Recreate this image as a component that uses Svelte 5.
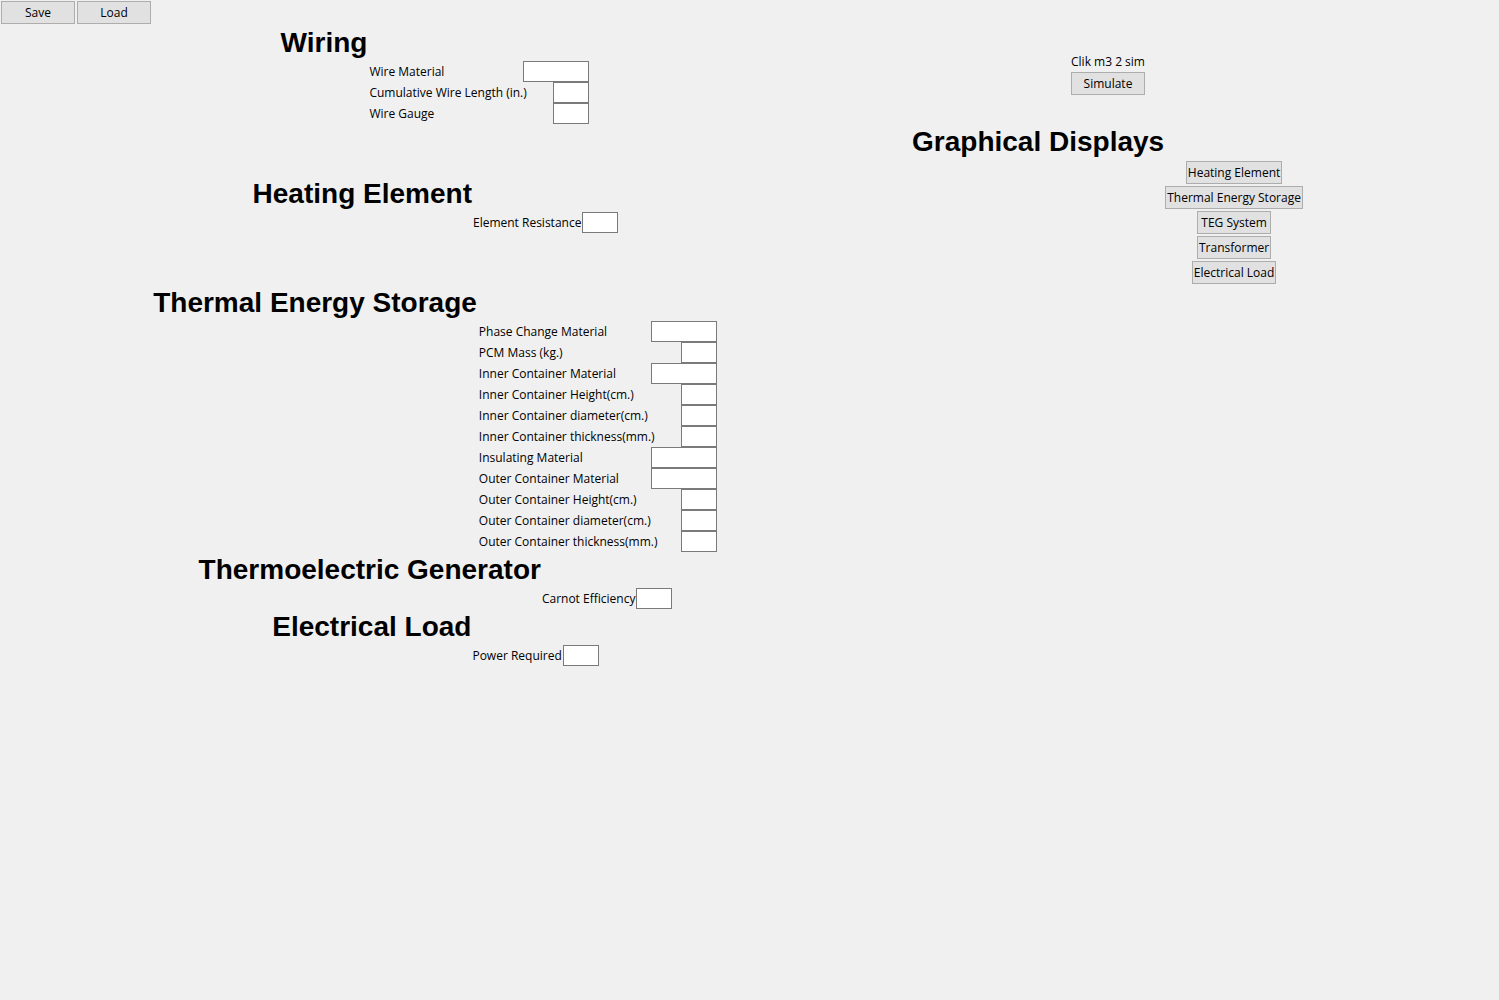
<script>
  const sections = [
    {
      title: 'Wiring',
      layout: 'medium',
      spaced: true,
      fields: [
        { label: 'Wire Material', wide: true },
        { label: 'Cumulative Wire Length (in.)' },
        { label: 'Wire Gauge' }
      ]
    },
    {
      title: 'Heating Element',
      layout: 'single',
      spaced: true,
      fields: [{ label: 'Element Resistance' }]
    },
    {
      title: 'Thermal Energy Storage',
      layout: 'large',
      fields: [
        { label: 'Phase Change Material', wide: true },
        { label: 'PCM Mass (kg.)' },
        { label: 'Inner Container Material', wide: true },
        { label: 'Inner Container Height(cm.)' },
        { label: 'Inner Container diameter(cm.)' },
        { label: 'Inner Container thickness(mm.)' },
        { label: 'Insulating Material', wide: true },
        { label: 'Outer Container Material', wide: true },
        { label: 'Outer Container Height(cm.)' },
        { label: 'Outer Container diameter(cm.)' },
        { label: 'Outer Container thickness(mm.)' }
      ]
    },
    {
      title: 'Thermoelectric Generator',
      layout: 'single',
      fields: [{ label: 'Carnot Efficiency' }]
    },
    {
      title: 'Electrical Load',
      layout: 'single',
      fields: [{ label: 'Power Required' }]
    }
  ];

  const displays = [
    'Heating Element',
    'Thermal Energy Storage',
    'TEG System',
    'Transformer',
    'Electrical Load'
  ];
</script>

<nav class="toolbar" aria-label="File">
  <button type="button">Save</button>
  <button type="button">Load</button>
</nav>

<main>
  <form class="column">
    {#each sections as section, s}
      <section class="group" class:spaced={section.spaced}>
        <h2>{section.title}</h2>
        <div class="fields {section.layout}">
          {#each section.fields as field, f}
            <label for="field-{s}-{f}">{field.label}</label>
            <input id="field-{s}-{f}" type="text" class:wide={field.wide} />
          {/each}
        </div>
      </section>
    {/each}
  </form>

  <div class="column side">
    <div class="simulate">
      <span>Clik m3 2 sim</span>
      <button type="button">Simulate</button>
    </div>
    <section class="group">
      <h2>Graphical Displays</h2>
      <div class="displays">
        {#each displays as name}
          <button type="button">{name}</button>
        {/each}
      </div>
    </section>
  </div>
</main>

<style>
  :global(body) {
    margin: 0;
    background: #f0f0f0;
    color: #000;
    font: 12px/16px 'Open Sans', 'Segoe UI', sans-serif;
  }

  .toolbar {
    display: flex;
    gap: 2px;
    padding: 1px;
  }

  button {
    box-sizing: border-box;
    min-width: 74px;
    height: 23px;
    padding: 0 1px;
    border: 1px solid #adadad;
    border-radius: 0;
    background: #e1e1e1;
    color: inherit;
    font: inherit;
    white-space: nowrap;
  }

  main {
    display: grid;
    grid-template-columns: 872fr 472fr 155fr;
  }

  .column {
    display: flex;
    flex-direction: column;
    align-items: center;
  }

  .group {
    display: grid;
    grid-template-columns: auto auto;
    grid-template-rows: 36px auto;
  }

  .spaced {
    margin-bottom: 52px;
  }

  h2 {
    margin: 0;
    font: bold 28px/36px 'Liberation Sans', Arial, sans-serif;
    white-space: nowrap;
  }

  .fields {
    grid-area: 2 / 2;
    display: grid;
    grid-auto-rows: 21px;
    align-items: center;
    padding: 0 2px;
    white-space: nowrap;
  }

  .single {
    grid-template-columns: auto auto;
    column-gap: 1px;
    padding: 0 1px;
  }

  .medium {
    grid-template-columns: 154px 66px;
  }

  .large {
    grid-template-columns: 172px 66px;
  }

  input {
    box-sizing: border-box;
    justify-self: end;
    width: 36px;
    height: 21px;
    padding: 0 2px;
    border: 1px solid #7a7a7a;
    border-radius: 0;
    background: #fff;
    font: inherit;
  }

  input.wide {
    width: 66px;
  }

  label {
    position: relative;
  }

  .side {
    padding-top: 29px;
  }

  .simulate {
    display: flex;
    flex-direction: column;
    align-items: center;
    gap: 2px;
    margin-bottom: 29px;
  }

  .displays {
    grid-area: 2 / 2;
    display: flex;
    flex-direction: column;
    align-items: center;
    gap: 2px;
    padding: 1px;
  }
</style>
